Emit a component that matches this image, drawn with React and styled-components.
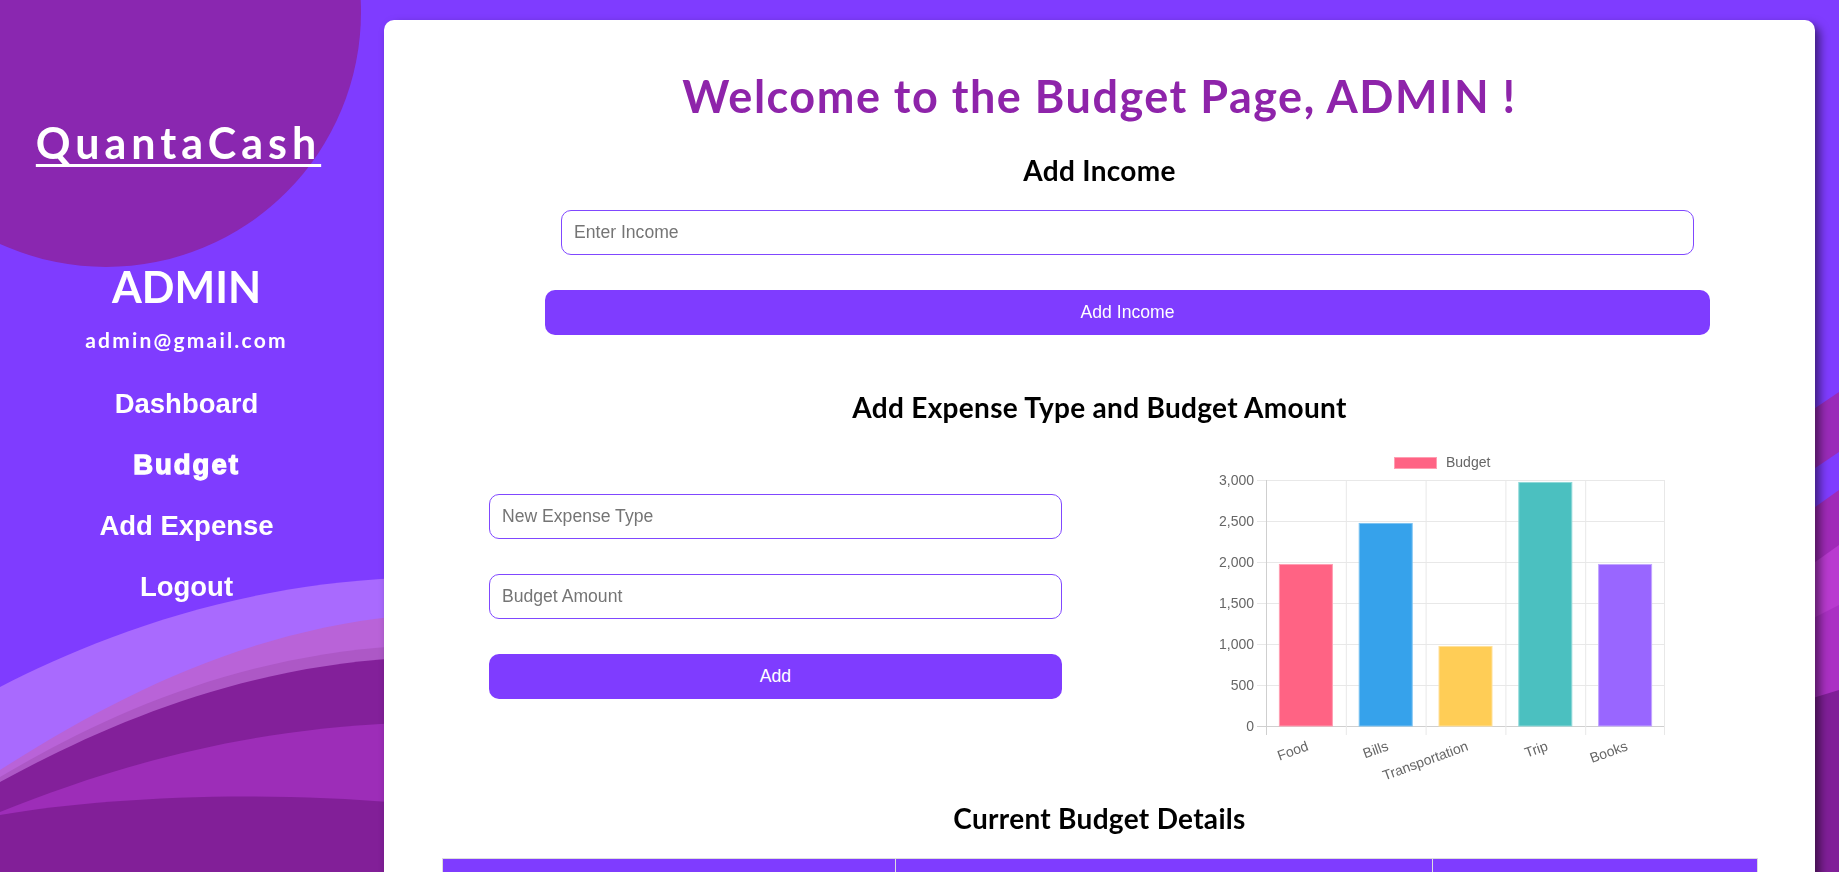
import React from "react";
import styled, { createGlobalStyle } from "styled-components";

const GlobalStyle = createGlobalStyle`
  html, body { margin: 0; padding: 0; height: 100%; overflow: hidden; }
  body { background: #7f3cff; font-family: "Liberation Sans", Arial, sans-serif; }
  *, *::before, *::after { box-sizing: border-box; }
`;

const Page = styled.div`
  position: relative;
  display: flex;
  min-height: 100vh;
`;

const Backdrop = styled.svg`
  position: fixed;
  inset: 0;
  width: 100%;
  height: 100%;
  z-index: 0;
  pointer-events: none;
`;

const Sidebar = styled.aside`
  position: relative;
  z-index: 1;
  flex: 0 0 373px;
  display: flex;
  flex-direction: column;
  align-items: center;
  padding-top: 121px;
  color: #fff;
`;

const Logo = styled.a`
  font-family: Lato, "Noto Sans", sans-serif;
  font-weight: 700;
  font-size: 43px;
  line-height: 43px;
  letter-spacing: 5px;
  color: #fff;
  text-decoration: underline;
  text-decoration-thickness: 3px;
  text-underline-offset: 5px;
  text-decoration-skip-ink: none;
  margin-right: 16px;
`;

const UserName = styled.h2`
  margin: 101px 0 0;
  font-family: Lato, "Noto Sans", sans-serif;
  font-weight: 700;
  font-size: 43px;
  line-height: 43px;
`;

const UserMail = styled.p`
  margin: 21px 0 0;
  font-family: Lato, "Noto Sans", sans-serif;
  font-weight: 700;
  font-size: 21px;
  line-height: 21px;
  letter-spacing: 2.2px;
`;

const Nav = styled.nav`
  display: flex;
  flex-direction: column;
  align-items: center;
  gap: 33px;
  margin-top: 40px;
`;

const NavLink = styled.a`
  font-family: "Liberation Sans", Arial, sans-serif;
  font-weight: 700;
  font-size: 27.5px;
  line-height: 28px;
  color: #fff;
  text-decoration: none;
  letter-spacing: ${(p) => (p.$active ? "2px" : "0")};
  -webkit-text-stroke: ${(p) => (p.$active ? "1.3px #fff" : "0")};
`;

const Main = styled.main`
  position: relative;
  z-index: 1;
  flex: 1;
  padding: 20px 24px 0 11px;
`;

const Card = styled.section`
  background: #fff;
  border-radius: 10px;
  box-shadow: 5px 5px 10px rgba(0, 0, 0, 0.5);
  min-height: 1300px;
  display: flex;
  flex-direction: column;
  align-items: center;
  padding-top: 54px;
`;

const Title = styled.h1`
  margin: 0;
  font-family: Lato, "Noto Sans", sans-serif;
  font-weight: 700;
  font-size: 45px;
  line-height: 44px;
  letter-spacing: 1.5px;
  color: #8e24aa;
`;

const SectionTitle = styled.h2`
  margin: ${(p) => p.$mt || 0}px 0 0;
  font-family: Lato, "Noto Sans", sans-serif;
  font-weight: 700;
  font-size: 28px;
  line-height: 28px;
  letter-spacing: 0.3px;
  color: #000;
`;

const IncomeForm = styled.form`
  align-self: flex-start;
  margin: 26px 0 0 161px;
  width: 1165px;
  display: flex;
  flex-direction: column;
  align-items: center;
  gap: 35px;
`;

const Field = styled.input`
  width: ${(p) => p.$w || "100%"};
  height: 45px;
  padding: 0 12px;
  border: 1px solid #8048ff;
  border-radius: 10px;
  font-family: "Liberation Sans", Arial, sans-serif;
  font-size: 17.6px;
  color: #222;
  background: #fff;
  outline: none;
  &::placeholder { color: #757575; }
`;

const Button = styled.button`
  width: 100%;
  height: 45px;
  border: none;
  border-radius: 10px;
  background: #7f3cff;
  color: #fff;
  font-family: "Liberation Sans", Arial, sans-serif;
  font-size: 17.6px;
  cursor: pointer;
`;

const ExpenseRow = styled.div`
  align-self: stretch;
  display: flex;
  align-items: flex-start;
  margin-top: 19px;
`;

const ExpenseForm = styled.form`
  margin: 54px 0 0 105px;
  width: 573px;
  display: flex;
  flex-direction: column;
  gap: 35px;
`;

const ChartBox = styled.svg`
  display: block;
  margin-left: 138px;
  width: 480px;
  height: 352px;
  font-family: "Liberation Sans", Arial, sans-serif;
`;

const Table = styled.table`
  margin-top: 26px;
  width: 1316px;
  border-collapse: collapse;
  font-family: "Liberation Sans", Arial, sans-serif;
`;

const HeadCell = styled.th`
  width: ${(p) => p.$w}px;
  padding: 22px 12px 14px;
  background: #7f3cff;
  color: #fff;
  border: 1px solid #ddd;
  font-size: 17px;
  line-height: 20px;
  text-align: left;
`;

const data = [
  { label: "Food", value: 1970, color: "#ff6384", border: "#ff9eb2" },
  { label: "Bills", value: 2470, color: "#36a2eb", border: "#7cc3f2" },
  { label: "Transportation", value: 970, color: "#ffcd56", border: "#ffe099" },
  { label: "Trip", value: 2970, color: "#4bc0c0", border: "#8ed8d8" },
  { label: "Books", value: 1970, color: "#9966ff", border: "#c2a6ff" },
];

const PL = 66, PR = 465, PT = 40, PB = 286;
const yFor = (v) => PB - (v / 3000) * (PB - PT);

function BudgetChart() {
  const cw = (PR - PL) / data.length;
  const ticks = [3000, 2500, 2000, 1500, 1000, 500, 0];
  return (
    <ChartBox viewBox="0 0 480 352">
      <rect x="194.5" y="17.5" width="42" height="11" fill="#ff6384" stroke="#ff9eb2" />
      <text x="246" y="23" fontSize="14" fill="#666" dominantBaseline="middle">Budget</text>
      {ticks.map((t) => (
        <g key={t}>
          <line x1={PL - 9} x2={PR} y1={yFor(t) + 0.5} y2={yFor(t) + 0.5} stroke={t === 0 ? "#cfcfcf" : "#e8e8e8"} />
          <text x={PL - 12} y={yFor(t) + 1} fontSize="14" fill="#666" textAnchor="end" dominantBaseline="middle">
            {t.toLocaleString("en-US")}
          </text>
        </g>
      ))}
      {data.map((d, i) => (
        <line key={d.label} x1={PL + i * cw + 0.5} x2={PL + i * cw + 0.5} y1={PT} y2={PB + 9} stroke={i === 0 ? "#cfcfcf" : "#e8e8e8"} />
      ))}
      <line x1={PR - 0.5} x2={PR - 0.5} y1={PT} y2={PB + 9} stroke="#e8e8e8" />
      {data.map((d, i) => {
        const cx = PL + i * cw + cw / 2;
        const top = yFor(d.value);
        return (
          <g key={d.label}>
            <rect x={cx - 26.5} y={top} width="53" height={PB - top} fill={d.color} stroke={d.border} strokeWidth="1" />
            <text
              x={cx}
              y={300}
              fontSize="14"
              fill="#666"
              textAnchor="end"
              dominantBaseline="hanging"
              transform={`rotate(-20 ${cx} 300)`}
            >
              {d.label}
            </text>
          </g>
        );
      })}
    </ChartBox>
  );
}

function Waves() {
  return (
    <Backdrop viewBox="0 0 1839 872" preserveAspectRatio="xMinYMin slice">
      <circle cx="106" cy="12" r="255" fill="#8a27b0" />
      <path d="M0,687 C90,640 230,585 400,578 L400,872 L0,872 Z" fill="#a96afe" />
      <path d="M0,770 C110,700 240,632 400,616 L400,872 L0,872 Z" fill="#b963d8" />
      <path d="M0,777 C110,712 240,656 400,646 L400,872 L0,872 Z" fill="#ad58c6" />
      <path d="M0,782 C110,722 240,668 400,658 L400,872 L0,872 Z" fill="#83209a" />
      <path d="M0,812 C100,772 230,730 400,723 L400,872 L0,872 Z" fill="#9d2db8" />
      <path d="M0,815 C100,798 250,790 400,803 L400,872 L0,872 Z" fill="#821f98" />

      <path d="M1790,425 L1839,392 L1839,452 L1790,485 Z" fill="#9a2bb9" />
      <path d="M1790,525 L1839,490 L1839,872 L1790,872 Z" fill="#a02ab8" />
      <path d="M1790,580 L1839,545 L1839,872 L1790,872 Z" fill="#b93ad0" />
      <path d="M1790,630 L1839,605 L1839,872 L1790,872 Z" fill="#ab30c4" />
      <path d="M1790,705 L1839,690 L1839,872 L1790,872 Z" fill="#801f98" />
    </Backdrop>
  );
}

export default function App() {
  return (
    <>
      <GlobalStyle />
      <Page>
        <Waves />
        <Sidebar>
          <Logo href="#">QuantaCash</Logo>
          <UserName>ADMIN</UserName>
          <UserMail>admin@gmail.com</UserMail>
          <Nav>
            <NavLink href="#">Dashboard</NavLink>
            <NavLink href="#" $active>Budget</NavLink>
            <NavLink href="#">Add Expense</NavLink>
            <NavLink href="#">Logout</NavLink>
          </Nav>
        </Sidebar>
        <Main>
          <Card>
            <Title>Welcome to the Budget Page, ADMIN !</Title>
            <SectionTitle $mt={38}>Add Income</SectionTitle>
            <IncomeForm onSubmit={(e) => e.preventDefault()}>
              <Field $w="1133px" placeholder="Enter Income" />
              <Button type="submit">Add Income</Button>
            </IncomeForm>
            <SectionTitle $mt={58}>Add Expense Type and Budget Amount</SectionTitle>
            <ExpenseRow>
              <ExpenseForm onSubmit={(e) => e.preventDefault()}>
                <Field placeholder="New Expense Type" />
                <Field placeholder="Budget Amount" />
                <Button type="submit">Add</Button>
              </ExpenseForm>
              <BudgetChart />
            </ExpenseRow>
            <SectionTitle $mt={12}>Current Budget Details</SectionTitle>
            <Table>
              <thead>
                <tr>
                  <HeadCell $w={454}>Expense Type</HeadCell>
                  <HeadCell $w={537}>Budget Amount</HeadCell>
                  <HeadCell $w={325}>Actions</HeadCell>
                </tr>
              </thead>
            </Table>
          </Card>
        </Main>
      </Page>
    </>
  );
}
